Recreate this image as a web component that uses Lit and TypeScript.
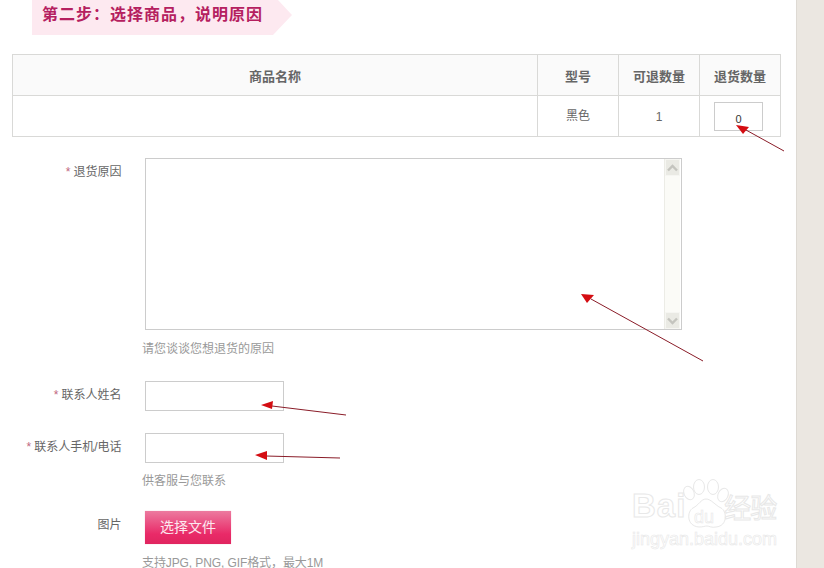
import { LitElement, css, html, svg } from "lit";
import { customElement } from "lit/decorators.js";

const COLUMNS = ["商品名称", "型号", "可退数量", "退货数量"];

// annotation arrows drawn over the form: tail, then tip
const ARROWS = [
  { x1: 784, y1: 151, x2: 746, y2: 130, head: "736,125 749,127 743,134" },
  { x1: 703, y1: 361, x2: 591, y2: 299, head: "581,294 594,295 587,303" },
  { x1: 346, y1: 415, x2: 272, y2: 406, head: "261,405 273,401 272,409" },
  { x1: 340, y1: 458, x2: 266, y2: 456, head: "255,455 267,451 267,460" },
];

@customElement("app-root")
export class AppRoot extends LitElement {
  static styles = css`
    :host {
      display: block;
      position: relative;
      width: 824px;
      height: 568px;
      overflow: hidden;
      background: #fff;
      font-family: "Liberation Sans", "Noto Sans CJK SC", sans-serif;
      font-size: 12px;
      color: #666;
    }
    .page {
      display: flex;
      height: 568px;
    }
    .main {
      width: 796px;
      flex-shrink: 0;
      padding-left: 12px;
      box-sizing: border-box;
    }
    .side {
      flex: 1;
      background: #ebe7e1;
      border-left: 1px solid #dedad4;
    }
    .step {
      display: flex;
      margin-left: 20px;
      height: 35px;
    }
    .step-text {
      width: 241px;
      padding-left: 10px;
      box-sizing: border-box;
      background: #fde9f0;
      color: #b5205f;
      font-size: 16px;
      font-weight: 700;
      letter-spacing: 1px;
      line-height: 30px;
      white-space: nowrap;
    }
    .step-tip {
      width: 19px;
      height: 35px;
      background: #fde9f0;
      clip-path: polygon(0 0, 5px 0, 19px 15px, 0 35px);
    }
    table {
      margin-top: 19px;
      width: 769px;
      border-collapse: collapse;
      table-layout: fixed;
    }
    th,
    td {
      height: 40px;
      padding: 0;
      border: 1px solid #d9d9d7;
      text-align: center;
      box-sizing: content-box;
    }
    th {
      background: #fafafa;
      color: #666;
      font-size: 13px;
      font-weight: 700;
    }
    .color-cell {
      padding-bottom: 3px;
      height: 37px;
    }
    .count-cell {
      padding-top: 1px;
      height: 39px;
    }
    .qty {
      display: block;
      width: 47px;
      height: 27px;
      margin-left: 14px;
      border: 1px solid #ccc;
      box-sizing: content-box;
      line-height: 33px;
      color: #333;
      font-size: 11px;
      text-align: center;
    }
    .form {
      margin-top: 21px;
    }
    .row {
      display: grid;
      grid-template-columns: 109.5px 1fr;
      column-gap: 23.5px;
    }
    .label {
      text-align: right;
      color: #666;
      line-height: 16px;
      white-space: nowrap;
    }
    .star {
      color: #c0677f;
      margin-right: 3px;
    }
    .reason .label {
      padding-top: 6px;
    }
    .area {
      display: flex;
      justify-content: flex-end;
      width: 534px;
      height: 170px;
      padding-right: 1px;
      box-sizing: content-box;
      border: 1px solid #ccc;
    }
    .scroll {
      display: flex;
      flex-direction: column;
      justify-content: space-between;
      width: 16px;
      background: #fbfbf7;
      border-left: 1px solid #ecece6;
      box-sizing: border-box;
    }
    .scroll-btn {
      display: flex;
      align-items: center;
      justify-content: center;
      height: 15px;
      background: #eaeae4;
      border: 1px solid #f6f6f2;
    }
    .hint {
      margin-left: -3px;
      color: #999;
      line-height: 16px;
      white-space: nowrap;
    }
    .hint-reason {
      margin-top: 11px;
    }
    .text-row {
      margin-top: 24px;
    }
    .text-row .label {
      padding-top: 6px;
    }
    .text-row + .text-row {
      margin-top: 22px;
    }
    .field {
      width: 137px;
      height: 28px;
      border: 1px solid #ccc;
    }
    .hint-contact {
      margin-top: 10px;
    }
    .file-row {
      margin-top: 22px;
    }
    .file-row .label {
      padding-top: 6px;
    }
    .file-btn {
      width: 86px;
      height: 33px;
      line-height: 33px;
      text-align: center;
      color: #fde8ef;
      font-size: 14px;
      background: linear-gradient(#ec7a9f, #e92a68 70%, #e0255f);
      box-shadow: 0 0 1px #f2b6ca;
    }
    .hint-file {
      margin-top: 11px;
      letter-spacing: -0.1px;
    }
    .arrows {
      position: absolute;
      left: 0;
      top: 0;
      pointer-events: none;
    }
    .mark {
      position: absolute;
      left: 632px;
      top: 478px;
      width: 148px;
      color: transparent;
      -webkit-text-stroke: 1px #e8e8e8;
      pointer-events: none;
    }
    .mark-logo {
      display: flex;
      align-items: center;
      height: 50px;
      padding-top: 6px;
      box-sizing: border-box;
      font-family: "Liberation Sans", sans-serif;
      font-size: 33px;
      font-weight: 700;
      letter-spacing: 1px;
    }
    .mark-cn {
      margin-left: 38px;
      font-family: "Noto Sans CJK SC", sans-serif;
      font-size: 27px;
      font-weight: 400;
      letter-spacing: -1px;
      white-space: nowrap;
    }
    .mark-url {
      font-family: "Liberation Sans", sans-serif;
      font-size: 18px;
      line-height: 22px;
      -webkit-text-stroke-width: 0.6px;
      white-space: nowrap;
    }
    .paw {
      position: absolute;
      left: 50px;
      top: 1px;
    }
    .mark-du {
      position: absolute;
      left: 62px;
      top: 29px;
      font-family: "Liberation Sans", sans-serif;
      font-size: 18px;
      line-height: 20px;
      -webkit-text-stroke-width: 0.6px;
    }
  `;

  private chevron(up: boolean) {
    return html`<svg width="11" height="8" viewBox="0 0 11 8">
      <path
        d=${up ? "M1 6.5 5.5 2 10 6.5" : "M1 1.5 5.5 6 10 1.5"}
        fill="none"
        stroke="#c4c4be"
        stroke-width="2.4"
      />
    </svg>`;
  }

  private renderArrows() {
    return html`<svg class="arrows" width="824" height="568">
      ${ARROWS.map(
        (a) => svg`
          <line x1=${a.x1} y1=${a.y1} x2=${a.x2} y2=${a.y2} stroke="#8a1c28" stroke-width="1" />
          <polygon points=${a.head} fill="#d40d12" />
        `,
      )}
    </svg>`;
  }

  render() {
    return html`
      <div class="page">
        <div class="main">
          <div class="step">
            <div class="step-text">第二步：选择商品，说明原因</div>
            <div class="step-tip"></div>
          </div>

          <table>
            <colgroup>
              <col style="width: 525px" />
              <col style="width: 81px" />
              <col style="width: 81px" />
              <col style="width: 81px" />
            </colgroup>
            <thead>
              <tr>
                ${COLUMNS.map((c) => html`<th>${c}</th>`)}
              </tr>
            </thead>
            <tbody>
              <tr>
                <td></td>
                <td class="color-cell">黑色</td>
                <td class="count-cell">1</td>
                <td><span class="qty">0</span></td>
              </tr>
            </tbody>
          </table>

          <div class="form">
            <div class="row reason">
              <div class="label"><span class="star">*</span>退货原因</div>
              <div class="area">
                <div class="scroll">
                  <div class="scroll-btn">${this.chevron(true)}</div>
                  <div class="scroll-btn">${this.chevron(false)}</div>
                </div>
              </div>
            </div>
            <div class="row">
              <div></div>
              <div class="hint hint-reason">请您谈谈您想退货的原因</div>
            </div>

            <div class="row text-row">
              <div class="label"><span class="star">*</span>联系人姓名</div>
              <div class="field"></div>
            </div>
            <div class="row text-row">
              <div class="label"><span class="star">*</span>联系人手机/电话</div>
              <div class="field"></div>
            </div>
            <div class="row">
              <div></div>
              <div class="hint hint-contact">供客服与您联系</div>
            </div>

            <div class="row file-row">
              <div class="label">图片</div>
              <div class="file-btn">选择文件</div>
            </div>
            <div class="row">
              <div></div>
              <div class="hint hint-file">支持JPG, PNG, GIF格式，最大1M</div>
            </div>
          </div>
        </div>
        <div class="side"></div>
      </div>

      ${this.renderArrows()}

      <div class="mark">
        <svg class="paw" width="50" height="52" viewBox="0 0 50 52" fill="none" stroke="#e8e8e8">
          <ellipse cx="7" cy="14" rx="5" ry="7" transform="rotate(-25 7 14)" />
          <ellipse cx="17" cy="8" rx="5.5" ry="7.5" />
          <ellipse cx="31" cy="8" rx="5.5" ry="7.5" />
          <ellipse cx="41" cy="16" rx="5" ry="7" transform="rotate(25 41 16)" />
          <path d="M24 20c-5 0-7 6-13 9-6 3-7 18 6 19 4 0 6-1 8-1s5 2 9 1c12-1 11-16 5-19-6-3-10-9-15-9z" />
        </svg>
        <div class="mark-du">du</div>
        <div class="mark-logo">Bai<span class="mark-cn">经验</span></div>
        <div class="mark-url">jingyan.baidu.com</div>
      </div>
    `;
  }
}
